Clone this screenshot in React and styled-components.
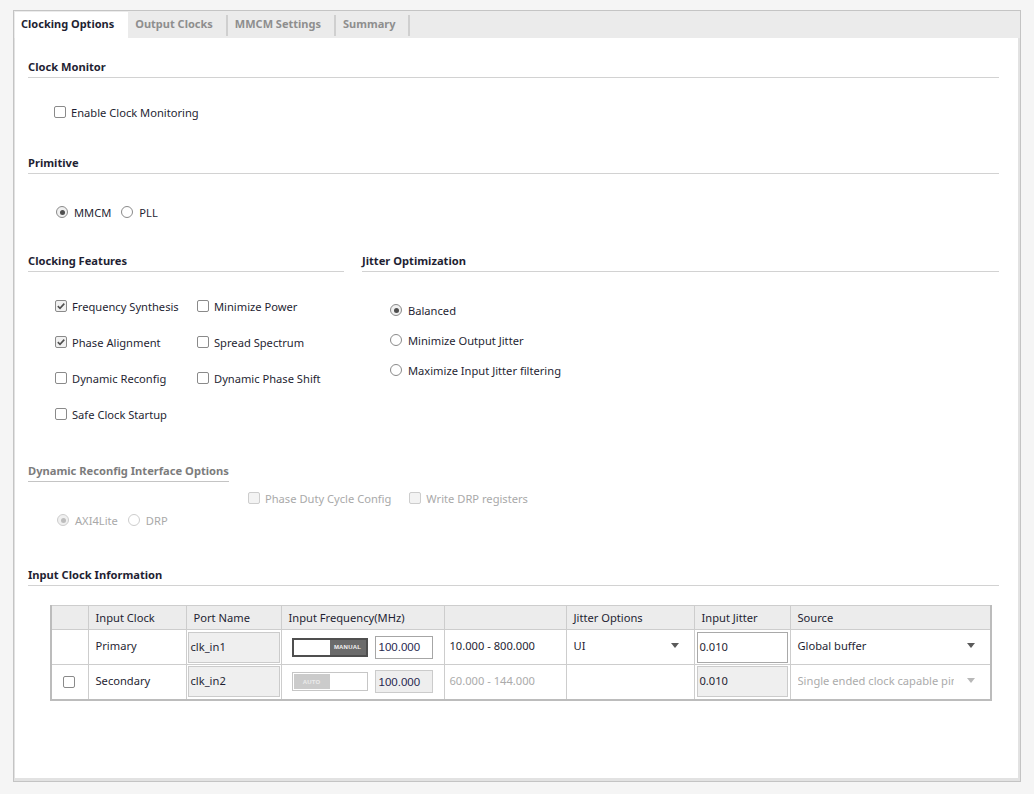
import React from 'react';
import styled, { createGlobalStyle } from 'styled-components';

const GlobalStyle = createGlobalStyle`
  body {
    margin: 0;
    background: #f5f5f5;
    font-family: "Noto Sans", "DejaVu Sans", sans-serif;
    font-size: 11.15px;
    color: #1f1f33;
  }
`;

const CheckBox = ({ checked, disabled }) => (
    <Box $disabled={disabled} $checked={checked}>
        {checked && (
            <svg width="10" height="10" viewBox="0 0 10 10">
                <path d="M1.8 5.2 L4 7.3 L8.3 2.6" fill="none" stroke="#505050" strokeWidth="1.6" />
            </svg>
        )}
    </Box>
);

const Radio = ({ checked, disabled }) => (
    <Circle $disabled={disabled} $checked={checked}>
        {checked && <Dot $disabled={disabled} />}
    </Circle>
);

const Arrow = ({ muted }) => (
    <svg width="8" height="5" viewBox="0 0 8 5">
        <path d="M0 0 L8 0 L4 5 Z" fill={muted ? '#b8b8b8' : '#5a5a5a'} />
    </svg>
);

const Check = ({ label, checked, disabled }) => (
    <Option $disabled={disabled}>
        <CheckBox checked={checked} disabled={disabled} />
        <span>{label}</span>
    </Option>
);

const RadioOpt = ({ label, checked, disabled }) => (
    <Option $disabled={disabled} $radio>
        <Radio checked={checked} disabled={disabled} />
        <span>{label}</span>
    </Option>
);

const App = () => {
    return (
        <Page>
            <GlobalStyle />
            <Frame>
                <TabBar>
                    <Tab $active>Clocking Options</Tab>
                    <Tab>Output Clocks</Tab>
                    <Sep />
                    <Tab>MMCM Settings</Tab>
                    <Sep />
                    <Tab>Summary</Tab>
                    <Sep />
                </TabBar>
                <Content>
                    <Title $mt={0}>Clock Monitor</Title>
                    <Row $mt={26} $indent={26}>
                        <Check label="Enable Clock Monitoring" />
                    </Row>

                    <Title $mt={35}>Primitive</Title>
                    <Row $mt={30} $indent={28} $gap={10}>
                        <RadioOpt label="MMCM" checked />
                        <RadioOpt label="PLL" />
                    </Row>

                    <Columns>
                        <LeftCol>
                            <Title $mt={0}>Clocking Features</Title>
                            <FeatureGrid>
                                <Check label="Frequency Synthesis" checked />
                                <Check label="Minimize Power" />
                                <Check label="Phase Alignment" checked />
                                <Check label="Spread Spectrum" />
                                <Check label="Dynamic Reconfig" />
                                <Check label="Dynamic Phase Shift" />
                                <Check label="Safe Clock Startup" />
                            </FeatureGrid>
                        </LeftCol>
                        <RightCol>
                            <Title $mt={0}>Jitter Optimization</Title>
                            <JitterList>
                                <RadioOpt label="Balanced" checked />
                                <RadioOpt label="Minimize Output Jitter" />
                                <RadioOpt label="Maximize Input Jitter filtering" />
                            </JitterList>
                        </RightCol>
                    </Columns>

                    <Title $mt={41} $muted>Dynamic Reconfig Interface Options</Title>
                    <Row $mt={8} $indent={220} $gap={18}>
                        <Check label="Phase Duty Cycle Config" disabled />
                        <Check label="Write DRP registers" disabled />
                    </Row>
                    <Row $mt={6} $indent={29} $gap={10}>
                        <RadioOpt label="AXI4Lite" checked disabled />
                        <RadioOpt label="DRP" disabled />
                    </Row>

                    <Title $mt={39}>Input Clock Information</Title>
                    <Table>
                        <colgroup>
                            <col style={{ width: 37 }} />
                            <col style={{ width: 98 }} />
                            <col style={{ width: 95 }} />
                            <col style={{ width: 163 }} />
                            <col style={{ width: 122 }} />
                            <col style={{ width: 128 }} />
                            <col style={{ width: 96 }} />
                            <col style={{ width: 201 }} />
                        </colgroup>
                        <thead>
                            <tr>
                                <Th />
                                <Th>Input Clock</Th>
                                <Th>Port Name</Th>
                                <Th>Input Frequency(MHz)</Th>
                                <Th />
                                <Th>Jitter Options</Th>
                                <Th>Input Jitter</Th>
                                <Th>Source</Th>
                            </tr>
                        </thead>
                        <tbody>
                            <Tr>
                                <Td />
                                <Td>Primary</Td>
                                <Td $box $pad={1}><Field>clk_in1</Field></Td>
                                <Td $box $pad={10}>
                                    <FreqWrap>
                                        <Toggle $on>
                                            <Half $fill="#fff" />
                                            <Half $fill="#6b6b6b" $ink="#f2f2f2">MANUAL</Half>
                                        </Toggle>
                                        <FreqInput $editable>100.000</FreqInput>
                                    </FreqWrap>
                                </Td>
                                <Td $pad={5}>10.000 - 800.000</Td>
                                <Td>
                                    <Select $right={8}><span>UI</span><Arrow /></Select>
                                </Td>
                                <Td $box $pad={2}><Field $editable>0.010</Field></Td>
                                <Td>
                                    <Select $right={8}><span>Global buffer</span><Arrow /></Select>
                                </Td>
                            </Tr>
                            <Tr>
                                <Td $box $pad={11}><CheckBox /></Td>
                                <Td>Secondary</Td>
                                <Td $box $pad={1}><Field>clk_in2</Field></Td>
                                <Td $box $pad={10}>
                                    <FreqWrap>
                                        <Toggle>
                                            <Half $fill="#cbcbcb" $ink="#ececec">AUTO</Half>
                                            <Half $fill="#fff" />
                                        </Toggle>
                                        <FreqInput>100.000</FreqInput>
                                    </FreqWrap>
                                </Td>
                                <Td $pad={5} $muted>60.000 - 144.000</Td>
                                <Td />
                                <Td $box $pad={2}><Field>0.010</Field></Td>
                                <Td $muted>
                                    <Select $right={8}>
                                        <Clip>Single ended clock capable pins</Clip>
                                        <Arrow muted />
                                    </Select>
                                </Td>
                            </Tr>
                        </tbody>
                    </Table>
                </Content>
            </Frame>
        </Page>
    );
};

export default App;

const Page = styled.div`
    padding: 10px 0 0 13px;
`;
const Frame = styled.div`
    width: 1008px;
    height: 772px;
    box-sizing: border-box;
    border: 1px solid #c4c4c4;
    background: #ebebeb;
    display: flex;
    flex-direction: column;
`;
const TabBar = styled.div`
    display: flex;
    height: 27px;
    box-sizing: border-box;
    padding: 1px 0 0 1px;
    font-size: 11px;
`;
const Tab = styled.div`
    display: flex;
    align-items: center;
    padding: ${p => (p.$active ? '0 14px 3px 6px' : '0 13px 3px 7px')};
    font-weight: 700;
    color: ${p => (p.$active ? '#1f1f33' : '#8e8e8e')};
    background: ${p => (p.$active ? '#fff' : 'transparent')};
`;
const Sep = styled.div`
    width: 2px;
    height: 21px;
    align-self: center;
    margin-top: 1px;
    background: #cfcfcf;
`;
const Content = styled.div`
    flex: 1;
    background: #fff;
    border-left: 1px solid #e2e2e2;
    border-right: 2px solid #e2e2e2;
    border-bottom: 3px solid #e2e2e2;
    padding: 21px 19px 0 13px;
    display: flex;
    flex-direction: column;
    align-items: stretch;
`;
const Title = styled.div`
    margin-top: ${p => p.$mt}px;
    align-self: ${p => (p.$muted ? 'flex-start' : 'stretch')};
    font-weight: 700;
    line-height: 15px;
    padding: 0 0 3px 0;
    color: ${p => (p.$muted ? '#7c7c7c' : '#1f1f33')};
    border-bottom: 1px solid ${p => (p.$muted ? '#c4c4c4' : '#d2d2d2')};
`;
const Row = styled.div`
    display: flex;
    align-items: center;
    gap: ${p => p.$gap || 0}px;
    height: 16px;
    margin-top: ${p => p.$mt}px;
    padding-left: ${p => p.$indent}px;
`;
const Option = styled.label`
    display: flex;
    align-items: center;
    gap: ${p => (p.$radio ? 6 : 5)}px;
    height: 16px;
    white-space: nowrap;
    color: ${p => (p.$disabled ? '#a9a9a9' : '#1f1f33')};
`;
const Box = styled.span`
    width: 12px;
    height: 12px;
    box-sizing: border-box;
    border: 1px solid ${p => (p.$disabled ? '#cdcdcd' : '#8a8a8a')};
    border-radius: 2px;
    background: ${p => (p.$disabled ? '#f3f3f3' : p.$checked ? '#f1f1f1' : '#fff')};
    display: flex;
    align-items: center;
    justify-content: center;
    flex-shrink: 0;
`;
const Circle = styled.span`
    width: 12px;
    height: 12px;
    box-sizing: border-box;
    border: 1px solid ${p => (p.$disabled ? '#cdcdcd' : '#8a8a8a')};
    border-radius: 50%;
    background: ${p => (p.$checked ? '#f0f0f0' : '#fff')};
    display: flex;
    align-items: center;
    justify-content: center;
    flex-shrink: 0;
`;
const Dot = styled.span`
    width: 5px;
    height: 5px;
    border-radius: 50%;
    background: ${p => (p.$disabled ? '#bdbdbd' : '#4e4e4e')};
`;
const Columns = styled.div`
    display: flex;
    gap: 18px;
    margin-top: 33px;
`;
const LeftCol = styled.div`
    width: 316px;
    display: flex;
    flex-direction: column;
`;
const RightCol = styled.div`
    flex: 1;
    display: flex;
    flex-direction: column;
`;
const FeatureGrid = styled.div`
    display: grid;
    grid-template-columns: 142px auto;
    row-gap: 20px;
    margin-top: 26px;
    padding-left: 27px;
`;
const JitterList = styled.div`
    display: flex;
    flex-direction: column;
    gap: 14px;
    margin-top: 30px;
    padding-left: 28px;
`;
const Table = styled.table`
    margin: 19px 0 0 22px;
    width: 941px;
    table-layout: fixed;
    border-collapse: collapse;
    border: 2px solid #bcbcbc;
    border-top: 1px solid #c8c8c8;
`;
const Tr = styled.tr`
    height: 35px;
`;
const Th = styled.th`
    height: 22px;
    padding: 0 7px 1px;
    background: #ececec;
    font-weight: 400;
    text-align: left;
    border: 1px solid #cdcdcd;
    white-space: nowrap;
`;
const Td = styled.td`
    padding: 0 ${p => (p.$pad !== undefined ? p.$pad : 7)}px ${p => (p.$box ? 0 : 3)}px;
    border: 1px solid #cdcdcd;
    color: ${p => (p.$muted ? '#ababab' : '#1f1f33')};
    white-space: nowrap;
    overflow: hidden;
`;
const Field = styled.div`
    height: 31px;
    box-sizing: border-box;
    display: flex;
    align-items: center;
    padding: 0 0 2px 2px;
    border: 1px solid ${p => (p.$editable ? '#a9a9a9' : '#cbcbcb')};
    background: ${p => (p.$editable ? '#fff' : '#efefef')};
`;
const FreqWrap = styled.div`
    display: flex;
    align-items: center;
    gap: 7px;
`;
const Toggle = styled.div`
    width: 76px;
    height: 19px;
    box-sizing: border-box;
    display: flex;
    border: ${p => (p.$on ? '2px solid #4f4f4f' : '1px solid #c6c6c6')};
    padding: ${p => (p.$on ? '0' : '1px')};
`;
const Half = styled.div`
    flex: 1;
    display: flex;
    align-items: center;
    justify-content: center;
    background: ${p => p.$fill};
    color: ${p => p.$ink || 'transparent'};
    font: 700 6px "Liberation Sans", Arial, sans-serif;
    letter-spacing: 0.2px;
`;
const FreqInput = styled.div`
    width: 58px;
    height: 23px;
    box-sizing: border-box;
    display: flex;
    align-items: center;
    padding-left: 3px;
    border: 1px solid ${p => (p.$editable ? '#a6a6a6' : '#cbcbcb')};
    background: ${p => (p.$editable ? '#fff' : '#eeeeee')};
    font: 11.5px "Liberation Sans", Arial, sans-serif;
    color: #27274f;
`;
const Select = styled.div`
    display: flex;
    align-items: center;
    justify-content: space-between;
    padding-right: ${p => p.$right}px;
`;
const Clip = styled.span`
    width: 156px;
    overflow: hidden;
    white-space: nowrap;
`;
